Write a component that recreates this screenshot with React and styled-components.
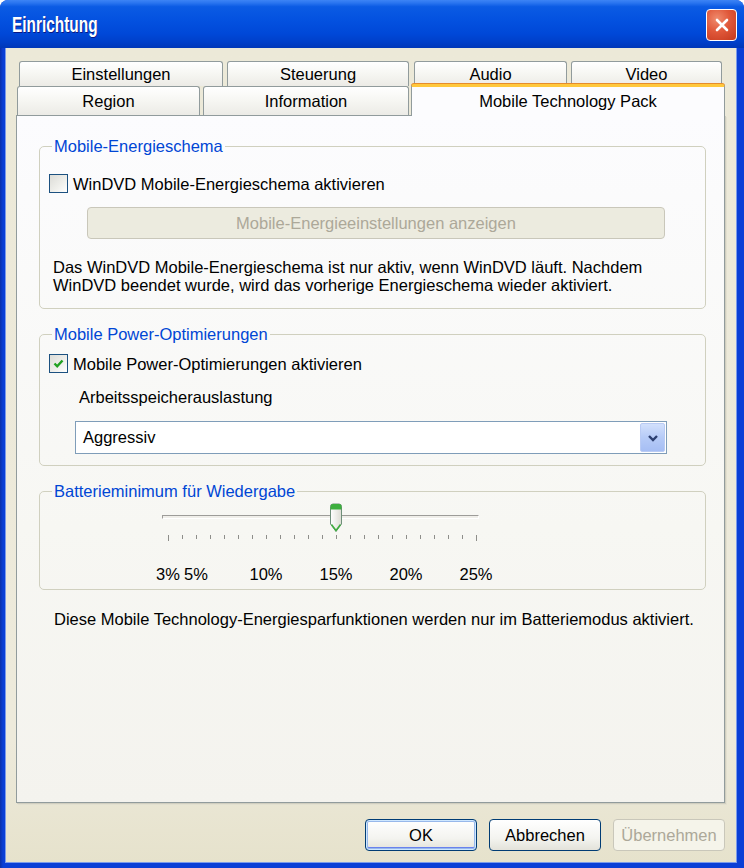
import React from 'react'
import styled, { createGlobalStyle } from 'styled-components'

const GlobalStyle = createGlobalStyle`
  html, body {
    margin: 0;
    padding: 0;
    background: #ffffff;
  }
  body {
    font-family: "Liberation Sans", Arial, sans-serif;
    font-size: 16.5px;
    color: #000;
  }
  * { box-sizing: border-box; }
`

const TICKS = Array.from({ length: 23 }, (_, i) => i + 3)
const LABELED = [3, 5, 10, 15, 20, 25]
const SLIDER_VALUE = 15

const App = () => {
  return (
    <>
      <GlobalStyle />
      <Window>
        <TitleBar>
          <Title>Einrichtung</Title>
          <CloseBtn>
            <svg width="16" height="16" viewBox="0 0 16 16">
              <path d="M3 3 L13 13 M13 3 L3 13" stroke="#fff" strokeWidth="2.6" strokeLinecap="round" />
            </svg>
          </CloseBtn>
        </TitleBar>
        <Client>
          <TabStrip>
            <TabRow $h={25}>
              <Tab $w={204} $ml={3}>Einstellungen</Tab>
              <Tab $w={182} $ml={4}>Steuerung</Tab>
              <Tab $w={153} $ml={5}>Audio</Tab>
              <Tab $w={151} $ml={4}>Video</Tab>
            </TabRow>
            <TabRow $h={29}>
              <Tab $w={183} $ml={1}>Region</Tab>
              <Tab $w={206} $ml={3}>Information</Tab>
              <ActiveTab $w={314} $ml={2}>Mobile Technology Pack</ActiveTab>
            </TabRow>
          </TabStrip>
          <Panel>
            <Group>
              <Legend>Mobile-Energieschema</Legend>
              <GroupBody $pt={19} $pb={14}>
                <CheckRow>
                  <CheckBox />
                  <span>WinDVD Mobile-Energieschema aktivieren</span>
                </CheckRow>
                <WideButton disabled>Mobile-Energieeinstellungen anzeigen</WideButton>
                <Para>
                  Das WinDVD Mobile-Energieschema ist nur aktiv, wenn WinDVD läuft. Nachdem
                  <br />
                  WinDVD beendet wurde, wird das vorherige Energieschema wieder aktiviert.
                </Para>
              </GroupBody>
            </Group>

            <Group $mt={16}>
              <Legend>Mobile Power-Optimierungen</Legend>
              <GroupBody $pt={11} $pb={11}>
                <CheckRow>
                  <CheckBox>
                    <svg width="13" height="13" viewBox="0 0 13 13">
                      <path d="M2.5 6.5 L5.2 9.3 L10.5 3.5" fill="none" stroke="#21A121" strokeWidth="2.4" />
                    </svg>
                  </CheckBox>
                  <span>Mobile Power-Optimierungen aktivieren</span>
                </CheckRow>
                <SubLabel>Arbeitsspeicherauslastung</SubLabel>
                <Select>
                  <span>Aggressiv</span>
                  <DropArrow>
                    <svg width="14" height="14" viewBox="0 0 14 14">
                      <path d="M3 5 L7 9 L11 5" fill="none" stroke="#2C3F70" strokeWidth="2.4" />
                    </svg>
                  </DropArrow>
                </Select>
              </GroupBody>
            </Group>

            <Group $mt={16}>
              <Legend>Batterieminimum für Wiedergabe</Legend>
              <GroupBody $pt={3} $pb={6}>
                <Slider>
                  <SliderRail>
                    <Track />
                    <Thumb style={{ left: (SLIDER_VALUE - 3) * 14 }}>
                      <svg width="14" height="30" viewBox="0 0 14 30">
                        <defs>
                          <linearGradient id="tb" x1="0" x2="1" y1="0" y2="0">
                            <stop offset="0" stopColor="#ffffff" />
                            <stop offset="1" stopColor="#dcdcd4" />
                          </linearGradient>
                        </defs>
                        <path d="M1.5 3.5 Q1.5 1 4 1 H10 Q12.5 1 12.5 3.5 V21 L7 28.5 L1.5 21 Z" fill="url(#tb)" stroke="#6F8F7A" strokeWidth="1" />
                        <path d="M1.5 3.5 Q1.5 1 4 1 H10 Q12.5 1 12.5 3.5 V6.5 H1.5 Z" fill="#3DAF3D" />
                        <path d="M2.5 21.5 L7 27.5 L11.5 21.5" fill="none" stroke="#3DAF3D" strokeWidth="1.4" />
                      </svg>
                    </Thumb>
                  </SliderRail>
                  <TickRow>
                    {TICKS.map((t, i) => (
                      <Slot key={t}>
                        <Tick $long={i === 0 || i === TICKS.length - 1} />
                      </Slot>
                    ))}
                  </TickRow>
                  <LabelRow>
                    {TICKS.map((t) => (
                      <Slot key={t}>{LABELED.includes(t) ? <span>{t}%</span> : null}</Slot>
                    ))}
                  </LabelRow>
                </Slider>
              </GroupBody>
            </Group>

            <Note>Diese Mobile Technology-Energiesparfunktionen werden nur im Batteriemodus aktiviert.</Note>
          </Panel>
          <Footer>
            <DlgButton $default>OK</DlgButton>
            <DlgButton>Abbrechen</DlgButton>
            <DlgButton disabled>Übernehmen</DlgButton>
          </Footer>
        </Client>
      </Window>
    </>
  )
}

export default App

const Window = styled.div`
  width: 744px;
  height: 868px;
  display: flex;
  flex-direction: column;
  background: linear-gradient(to right, #0B2FA8 0px, #0A3FD6 3px, #0A3FD6 100%);
  border-radius: 8px 8px 0 0;
  overflow: hidden;
`

const TitleBar = styled.div`
  height: 48px;
  flex: none;
  display: flex;
  align-items: center;
  justify-content: space-between;
  padding: 0 7px 0 12px;
  background: linear-gradient(
    to bottom,
    #3D84F5 0%,
    #2A75F0 6%,
    #0B5BE4 14%,
    #0452E0 40%,
    #0048D8 70%,
    #003FC9 88%,
    #0037B8 100%
  );
`

const Title = styled.span`
  display: inline-block;
  font-family: "Liberation Sans Narrow", "Liberation Sans", Arial, sans-serif;
  font-weight: bold;
  font-size: 22px;
  color: #fff;
  text-shadow: 1px 1px 0 #0A1883;
  transform: scaleX(0.7);
  transform-origin: left center;
  margin-top: 2px;
`

const CloseBtn = styled.div`
  width: 31px;
  height: 32px;
  display: flex;
  align-items: center;
  justify-content: center;
  border: 1px solid #fff;
  border-radius: 4px;
  background: radial-gradient(circle at 35% 30%, #F08C6E 0%, #E0583A 45%, #C5381C 100%);
  margin-top: 2px;
`

const Client = styled.div`
  flex: 1;
  display: flex;
  flex-direction: column;
  margin: 0 7px 5px 5px;
  padding: 13px 12px 0 11px;
  background: linear-gradient(to bottom, #ECE9D8 0%, #EDEADB 85%, #E6E2CC 100%);
  box-shadow: inset 1px 0 0 #7B9BEB, inset -1px 0 0 #7B9BEB, inset 0 -1px 0 #7B9BEB;
`

const TabStrip = styled.div`
  display: flex;
  flex-direction: column;
  flex: none;
`

const TabRow = styled.div`
  display: flex;
  align-items: flex-end;
  height: ${({ $h }) => $h}px;
`

const Tab = styled.div`
  width: ${({ $w }) => $w}px;
  margin-left: ${({ $ml }) => $ml || 0}px;
  height: 100%;
  display: flex;
  align-items: center;
  justify-content: center;
  padding-top: 1px;
  border: 1px solid #919B9C;
  border-bottom: none;
  border-radius: 3px 3px 0 0;
  background: linear-gradient(to bottom, #FFFFFF 0%, #F6F6F2 50%, #ECEBE6 100%);
  color: #000;
  white-space: nowrap;
`

const ActiveTab = styled(Tab)`
  height: 32px;
  margin-top: -3px;
  margin-bottom: -1px;
  position: relative;
  z-index: 1;
  align-items: flex-start;
  padding-top: 5px;
  background: #FCFCFE;
  border-top: 3px solid #FFC83C;
  box-shadow: 0 -1px 0 #E68B2C;
`

const Panel = styled.div`
  flex: 1;
  display: flex;
  flex-direction: column;
  padding: 21px 18px 0 22px;
  border: 1px solid #919B9C;
  background: linear-gradient(to bottom, #FCFCFE 0%, #F7F7F3 60%, #F4F3EE 100%);
  box-shadow: 1px 1px 0 #D0CEBF, 2px 2px 0 #E3E0D0;
`

const Group = styled.fieldset`
  margin: ${({ $mt }) => $mt || 0}px 0 0 0;
  padding: 0;
  border: 1px solid #D0D0BF;
  border-radius: 5px;
  min-width: 0;
`

const Legend = styled.legend`
  margin-left: 12px;
  padding: 0 2px;
  line-height: 18px;
  color: #0046D5;
`

const GroupBody = styled.div`
  display: flex;
  flex-direction: column;
  padding: ${({ $pt }) => $pt}px 0 ${({ $pb }) => $pb}px 9px;
`

const CheckRow = styled.label`
  display: flex;
  align-items: center;
  gap: 5px;
  height: 19px;
  line-height: 18px;
`

const CheckBox = styled.span`
  width: 19px;
  height: 19px;
  flex: none;
  display: flex;
  align-items: center;
  justify-content: center;
  border: 1px solid #1C5180;
  background: linear-gradient(135deg, #DCDCD7 0%, #F0F0EC 60%, #FFFFFF 100%);
`

const WideButton = styled.button`
  margin: 14px 40px 0 38px;
  height: 32px;
  font-family: inherit;
  font-size: 16.5px;
  color: #ACA899;
  background: #ECEBDF;
  border: 1px solid #C9C7BA;
  border-radius: 4px;
`

const Para = styled.p`
  margin: 19px 0 0 4px;
  line-height: 18px;
`

const SubLabel = styled.div`
  margin: 15px 0 0 30px;
  line-height: 18px;
`

const Select = styled.div`
  margin: 15px 38px 0 26px;
  height: 33px;
  display: flex;
  align-items: center;
  justify-content: space-between;
  padding: 0 1px 0 7px;
  background: #fff;
  border: 1px solid #7F9DB9;
`

const DropArrow = styled.span`
  width: 25px;
  height: 29px;
  display: flex;
  align-items: center;
  justify-content: center;
  border: 1px solid #B9CBF4;
  border-radius: 2px;
  background: linear-gradient(to bottom, #D2E0FC 0%, #B6CBF7 50%, #A6BEF4 100%);
`

const Slider = styled.div`
  margin-left: 112px;
  width: 322px;
  display: flex;
  flex-direction: column;
`

const SliderRail = styled.div`
  position: relative;
  height: 30px;
  display: flex;
  align-items: center;
`

const Track = styled.div`
  margin: 0 4px 2px 1px;
  flex: 1;
  height: 4px;
  border-top: 1px solid #9D9C99;
  border-left: 1px solid #9D9C99;
  border-bottom: 1px solid #fff;
  border-right: 1px solid #fff;
  background: #F0EFEA;
`

const Thumb = styled.div`
  position: absolute;
  top: 0;
  width: 14px;
  height: 30px;
  display: flex;
`

const TickRow = styled.div`
  display: flex;
  height: 7px;
  margin-top: 2px;
`

const Slot = styled.div`
  width: 14px;
  flex: none;
  display: flex;
  justify-content: center;
  white-space: nowrap;
`

const Tick = styled.div`
  width: 1px;
  height: ${({ $long }) => ($long ? 6 : 4)}px;
  background: #8E8E8A;
`

const LabelRow = styled.div`
  display: flex;
  margin-top: 23px;
  line-height: 18px;
`

const Note = styled.p`
  margin: 20px 0 0 15px;
  line-height: 18px;
`

const Footer = styled.div`
  height: 60px;
  flex: none;
  display: flex;
  justify-content: flex-end;
  align-items: flex-start;
  gap: 12px;
  padding-top: 16px;
`

const DlgButton = styled.button`
  width: 112px;
  height: 32px;
  font-family: inherit;
  font-size: 16.5px;
  color: ${({ disabled }) => (disabled ? '#ACA899' : '#000')};
  border: 1px solid ${({ disabled }) => (disabled ? '#C9C7BA' : '#003C74')};
  border-radius: 4px;
  background: ${({ disabled }) =>
    disabled ? '#F5F4EA' : 'linear-gradient(to bottom, #FFFFFF 0%, #F4F4F0 60%, #E3E2DA 100%)'};
  box-shadow: ${({ $default }) =>
    $default ? 'inset 0 0 0 1px #CEE7FF, inset 0 0 0 2px #98B8EA, inset 0 -2px 0 1px #6982EE' : 'none'};
`
